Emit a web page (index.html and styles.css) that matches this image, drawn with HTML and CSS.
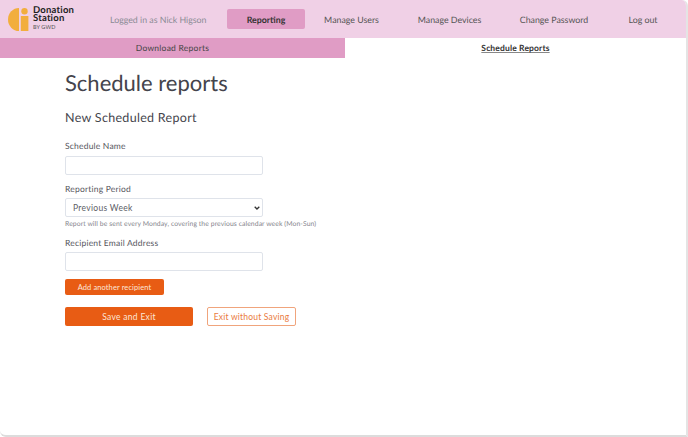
FILE: index.html
```html
<!DOCTYPE html>
<html lang="en">
<head>
<meta charset="utf-8">
<title>Schedule reports</title>
<link rel="stylesheet" href="styles.css">
</head>
<body>
<div class="window">
  <header class="topbar">
    <div class="brand">
      <svg class="logo" width="21" height="23" viewBox="0 0 21 23" aria-hidden="true">
        <path d="M11 0 A11 11.500 0 0 0 11 23 Z" fill="#f2ae3d"/>
        <circle cx="16.500" cy="3.200" r="3.200" fill="#f2ae3d"/>
        <rect x="12.800" y="8" width="7.600" height="15" fill="#f2ae3d"/>
      </svg>
      <div class="brand-text">
        <div class="brand-name">Donation<br>Station</div>
        <div class="brand-by">BY GWD</div>
      </div>
    </div>
    <nav class="nav">
      <span class="nav-user">Logged in as Nick Higson</span>
      <a class="nav-item nav-active">Reporting</a>
      <a class="nav-item nav-users">Manage Users</a>
      <a class="nav-item nav-devices">Manage Devices</a>
      <a class="nav-item nav-password">Change Password</a>
      <a class="nav-item nav-logout">Log out</a>
    </nav>
  </header>
  <div class="tabs">
    <a class="tab">Download Reports</a>
    <a class="tab tab-current">Schedule Reports</a>
  </div>
  <main class="content">
    <h1>Schedule reports</h1>
    <h2>New Scheduled Report</h2>
    <form class="form">
      <label class="label label-first">Schedule Name</label>
      <input class="field" type="text">
      <label class="label label-tight">Reporting Period</label>
      <select class="field field-select"><option>Previous Week</option></select>
      <p class="hint">Report will be sent every Monday, covering the previous calendar week (Mon-Sun)</p>
      <label class="label label-tight">Recipient Email Address</label>
      <input class="field" type="text">
      <button class="btn btn-add" type="button">Add another recipient</button>
      <div class="actions">
        <button class="btn btn-save" type="button">Save and Exit</button>
        <button class="btn btn-exit" type="button">Exit without Saving</button>
      </div>
    </form>
  </main>
</div>
</body>
</html>
```
FILE: styles.css
```css
* { box-sizing: border-box; }
html, body { margin: 0; padding: 0; height: 100%; background: #fff; }
body { font-family: "Lato", "Noto Sans", sans-serif; color: #3f3f46; overflow: hidden; text-rendering: geometricPrecision; }
.window {
  width: 688px; height: 437px;
  border-right: 2px solid #e4e4e4;
  border-bottom: 2px solid #dcdcdc;
  border-radius: 0 6px 0 6px;
  overflow: hidden;
  background: #fff;
}
.topbar { height: 38px; background: #f0d0e6; display: flex; align-items: center; }
.brand { width: 98px; flex: none; padding-left: 8px; display: flex; align-items: center; gap: 4px; }
.logo { display: block; flex: none; }
.brand-text { color: #222; }
.brand-name { font-size: 9.500px; line-height: 8px; font-weight: 700; letter-spacing: .2px; }
.brand-by { font-size: 5.500px; line-height: 7px; color: #555; margin-top: 2px; letter-spacing: .1px; }
.nav { flex: 1; display: flex; align-items: center; font-size: 8.800px; color: #555; }
.nav-user { width: 129px; padding-left: 12px; color: #8b8b95; flex: none; }
.nav-item { display: flex; align-items: center; justify-content: center; height: 20px; flex: none; }
.nav-active { width: 78px; background: #e09cc5; border-radius: 2px; font-weight: 700; color: #333; }
.nav-users { width: 93px; }
.nav-devices { width: 103px; }
.nav-password { width: 106px; }
.nav-logout { width: 72px; }
.tabs { display: flex; height: 20px; }
.tab { width: 345px; flex: none; display: flex; align-items: center; justify-content: center; background: #e09cc5; font-size: 8.500px; letter-spacing: .25px; font-weight: 400; color: #444; }
.tab-current { flex: 1; background: #fff; font-weight: 700; letter-spacing: .15px; text-decoration: underline; text-decoration-color: #888; color: #333; }
.content { padding: 0 0 0 65px; }
h1 { margin: 14px 0 0; font-size: 22px; line-height: 22px; font-weight: 400; color: #44444c; }
h2 { margin: 17px 0 0; font-size: 12.500px; line-height: 14px; font-weight: 400; letter-spacing: .3px; color: #44444c; }
.form { display: flex; flex-direction: column; align-items: flex-start; }
.label { font-size: 8.500px; line-height: 10px; letter-spacing: .2px; color: #55555d; margin: 9px 0 5px; }
.label-first { margin-top: 16px; }
.label-tight { margin-bottom: 4px; }
.field { width: 198px; height: 19px; border: 1px solid #dfe3ea; border-radius: 2px; background: #fff; display: block; margin: 0; padding: 0 7px; font: inherit; font-size: 8.500px; letter-spacing: .3px; color: #5d5d66; }
.field-select {
  appearance: none;
  background: #fff url("data:image/svg+xml,%3Csvg xmlns='http://www.w3.org/2000/svg' width='6' height='4'%3E%3Cpath d='M.7.7 3 3l2.300-2.300' fill='none' stroke='%23333' stroke-width='1.300'/%3E%3C/svg%3E") no-repeat right 2px center;
}
.hint { margin: 3px 0 0; font-size: 6.800px; line-height: 9px; letter-spacing: .09px; color: #85858d; }
.btn { font-family: inherit; border-radius: 2px; display: flex; align-items: center; justify-content: center; padding: 0; letter-spacing: .3px; }
.btn-add { width: 99px; height: 16px; margin-top: 8px; border: 0; background: #e85c14; color: #fde6d8; font-size: 7.500px; letter-spacing: .1px; }
.actions { display: flex; align-items: center; gap: 14px; margin-top: 12px; }
.btn-save { width: 128px; height: 19px; border: 0; background: #e85c14; color: #fde6d8; font-size: 8.500px; }
.btn-exit { width: 89px; height: 19px; border: 1px solid #f0a47c; background: #fff; color: #ea7a40; font-size: 8.500px; letter-spacing: .2px; }
```
